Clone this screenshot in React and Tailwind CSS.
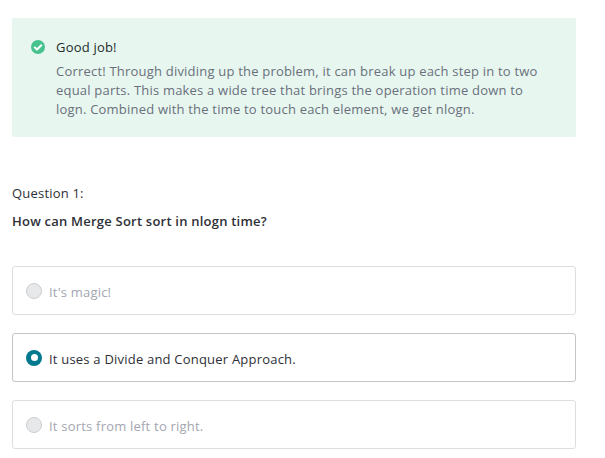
function Radio({ selected }) {
  if (!selected) {
    return <span className="size-4 rounded-full border border-[#cccdce] bg-[#e7e8ea]" />;
  }
  return (
    <span className="flex size-4 items-center justify-center rounded-full bg-[#03798f]">
      <span className="size-[7px] rounded-full bg-white" />
    </span>
  );
}

function Option({ text, selected }) {
  return (
    <label className={`flex h-[49px] items-center rounded-[3px] border pl-[13px] ${selected ? "border-[#c4c4c6] text-[#2e3037]" : "border-[#dedede] text-[#a3a6b0]"}`}>
      <Radio selected={selected} />
      <span className="ml-[7px] pt-[3px] leading-[19px] tracking-[0.21px]">{text}</span>
    </label>
  );
}

export default function App() {
  return (
    <main className="h-[458px] w-[605px] overflow-hidden bg-white pl-3 pr-[29px] pt-[18px] font-['Open_Sans',sans-serif] text-[13px]">
      <section className="flex h-[119px] rounded-[2px] bg-[#e7f7f0] pl-[19px] pt-[19px] tracking-[0.205px]">
        <svg className="mt-[3px] size-[14px] shrink-0" viewBox="0 0 14 14">
          <circle cx="7" cy="7" r="7" fill="#46c28e" />
          <path d="M3.3 6.9 6 9.5l4.8-4.7" fill="none" stroke="#fff" strokeWidth="2" />
        </svg>
        <div className="ml-[11px]">
          <h2 className="leading-5 text-[#1f2b2b]">Good job!</h2>
          <p className="mt-[5px] w-[500px] leading-[19px] text-[#6a6f7b]">
            Correct! Through dividing up the problem, it can break up each step in to two<br />
            equal parts. This makes a wide tree that brings the operation time down to<br />
            logn. Combined with the time to touch each element, we get nlogn.
          </p>
        </div>
      </section>
      <p className="mt-[47px] leading-[19px] tracking-[0.2px] text-[#2e3037]">Question 1:</p>
      <h1 className="mt-[9px] font-semibold leading-[19px] tracking-[0.22px] text-[#2e3037]">How can Merge Sort sort in nlogn time?</h1>
      <div className="mt-[35px] flex flex-col gap-[18px]">
        <Option text="It's magic!" />
        <Option text="It uses a Divide and Conquer Approach." selected />
        <Option text="It sorts from left to right." />
      </div>
    </main>
  );
}
